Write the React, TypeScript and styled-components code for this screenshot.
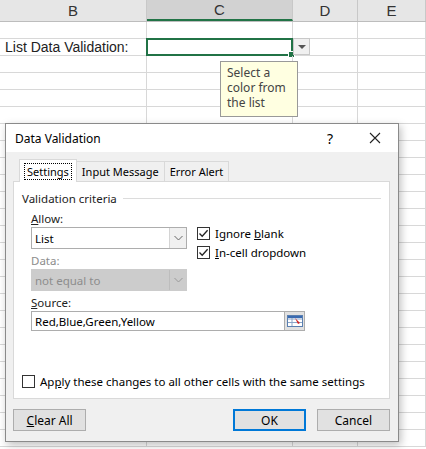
import React from "react";
import styled, { createGlobalStyle } from "styled-components";

const Global = createGlobalStyle`
  body { margin: 0; background: #fff; font-family: "Noto Sans", "DejaVu Sans", sans-serif; }
  * { box-sizing: border-box; }
`;

const cols = [
  { name: "B", w: 147 },
  { name: "C", w: 146, active: true },
  { name: "D", w: 65 },
  { name: "E", w: 68 },
];

const Page = styled.div`
  position: relative;
  width: 426px;
  height: 449px;
  overflow: hidden;
`;

const HeaderRow = styled.div`
  display: flex;
  height: 22px;
  background: #e6e6e6;
  border-bottom: 1px solid #bdbdbd;
`;

const HeaderCell = styled.div<{ $w: number; $active?: boolean }>`
  width: ${(p) => p.$w}px;
  flex: none;
  display: flex;
  align-items: center;
  justify-content: center;
  font-family: "Liberation Sans", Arial, sans-serif;
  font-size: 15px;
  color: #333;
  border-right: 1px solid #c8c8c8;
  background: ${(p) => (p.$active ? "#d2d2d2" : "transparent")};
  border-bottom: ${(p) => (p.$active ? "2px solid #217346" : "none")};
`;

const Row = styled.div`
  display: flex;
  height: 17px;
  border-bottom: 1px solid #d8d8d8;
`;

const Cell = styled.div<{ $w: number }>`
  position: relative;
  width: ${(p) => p.$w}px;
  flex: none;
  border-right: 1px solid #d8d8d8;
  font-family: "Liberation Sans", Arial, sans-serif;
  font-size: 14px;
  line-height: 17px;
  padding-left: 5px;
  color: #222;
`;

const Selected = styled.div`
  position: absolute;
  left: -1px;
  top: -1px;
  right: -1px;
  bottom: -1px;
  border: 2px solid #217346;
  &::after {
    content: "";
    position: absolute;
    right: -4px;
    bottom: -4px;
    width: 5px;
    height: 5px;
    background: #217346;
    border: 1px solid #fff;
  }
`;

const DropBtn = styled.div`
  position: absolute;
  left: 293px;
  top: 38px;
  width: 17px;
  height: 17px;
  background: #f0f0f0;
  border: 1px solid #c8c8c8;
  display: flex;
  align-items: center;
  justify-content: center;
  &::after {
    content: "";
    border-left: 4px solid transparent;
    border-right: 4px solid transparent;
    border-top: 4px solid #555;
  }
`;

const Tooltip = styled.div`
  position: absolute;
  left: 220px;
  top: 61px;
  width: 78px;
  height: 56px;
  background: #ffffe1;
  border: 1px solid #999;
  padding: 3px 6px;
  font-size: 12px;
  line-height: 15px;
  color: #444;
`;

const Dialog = styled.div`
  position: absolute;
  left: 5px;
  top: 123px;
  width: 394px;
  height: 319px;
  background: #f0f0f0;
  border: 1px solid #8a8a8a;
  box-shadow: 2px 3px 8px rgba(0, 0, 0, 0.25);
  display: flex;
  flex-direction: column;
  font-size: 11.5px;
  color: #000;
`;

const TitleBar = styled.div`
  height: 30px;
  background: #fff;
  display: flex;
  align-items: center;
  padding-left: 9px;
  font-size: 12px;
`;

const TitleText = styled.span`
  flex: 1;
`;

const TitleIcon = styled.span<{ $w: number }>`
  width: ${(p) => p.$w}px;
  display: flex;
  justify-content: center;
  font-size: 14px;
`;

const Body = styled.div`
  flex: 1;
  padding: 6px 8px 10px 7px;
  display: flex;
  flex-direction: column;
`;

const Tabs = styled.div`
  display: flex;
  height: 23px;
  align-items: flex-end;
  margin-left: 6px;
`;

const Tab = styled.div<{ $active?: boolean }>`
  height: ${(p) => (p.$active ? 23 : 20)}px;
  padding: 0 5px;
  display: flex;
  align-items: center;
  font-size: 11px;
  border: 1px solid #d9d9d9;
  border-bottom: none;
  background: ${(p) => (p.$active ? "#fff" : "#f0f0f0")};
  margin-right: -1px;
  position: relative;
  z-index: ${(p) => (p.$active ? 2 : 1)};
  margin-bottom: ${(p) => (p.$active ? -1 : 0)}px;
`;

const Focus = styled.span`
  outline: 1px dotted #000;
  padding: 0 2px;
`;

const Panel = styled.div`
  height: 218px;
  background: #fff;
  border: 1px solid #d9d9d9;
  padding: 9px 8px 0 8px;
  display: flex;
  flex-direction: column;
`;

const Legend = styled.div`
  display: flex;
  align-items: center;
  gap: 6px;
  color: #222;
  &::after {
    content: "";
    flex: 1;
    border-top: 1px solid #dcdcdc;
  }
`;

const Criteria = styled.div`
  display: flex;
  gap: 10px;
  padding-left: 9px;
  margin-top: 4px;
`;

const Column = styled.div`
  display: flex;
  flex-direction: column;
  width: 156px;
`;

const Label = styled.div<{ $disabled?: boolean }>`
  height: 17px;
  line-height: 17px;
  color: ${(p) => (p.$disabled ? "#8c8c8c" : "#222")};
`;

const Select = styled.div<{ $disabled?: boolean }>`
  height: 22px;
  border: 1px solid ${(p) => (p.$disabled ? "#cccccc" : "#adadad")};
  background: ${(p) => (p.$disabled ? "#cccccc" : "#fff")};
  color: ${(p) => (p.$disabled ? "#8c8c8c" : "#000")};
  display: flex;
  align-items: center;
  padding-left: 3px;
  margin-bottom: 3px;
`;

const SelectValue = styled.span`
  flex: 1;
`;

const Chevron = styled.span<{ $disabled?: boolean }>`
  width: 17px;
  height: 20px;
  border-left: 1px solid ${(p) => (p.$disabled ? "#bdbdbd" : "#d4d4d4")};
  background: ${(p) => (p.$disabled ? "#cccccc" : "#f0f0f0")};
  display: flex;
  align-items: center;
  justify-content: center;
`;

const Checks = styled.div`
  display: flex;
  flex-direction: column;
  gap: 4px;
  padding-top: 16px;
`;

const Check = styled.label`
  display: flex;
  align-items: center;
  gap: 5px;
`;

const Box = styled.span`
  width: 13px;
  height: 13px;
  border: 1px solid #333;
  background: #fff;
  display: flex;
  align-items: center;
  justify-content: center;
`;

const SourceWrap = styled.div`
  padding-left: 9px;
`;

const SourceInput = styled.div`
  width: 274px;
  height: 20px;
  border: 1px solid #adadad;
  display: flex;
  align-items: center;
  padding-left: 3px;
`;

const RefBtn = styled.span`
  width: 21px;
  height: 20px;
  margin-right: -1px;
  border: 1px solid #adadad;
  background: #e1e1e1;
  display: flex;
  align-items: center;
  justify-content: center;
`;

const Apply = styled(Check)`
  margin-top: auto;
  margin-bottom: 9px;
`;

const Buttons = styled.div`
  display: flex;
  margin-top: 10px;
`;

const Button = styled.div<{ $default?: boolean; $ml?: number }>`
  width: ${(p) => (p.$default ? 73 : 74)}px;
  height: 22px;
  margin-left: ${(p) => p.$ml ?? 0}px;
  border: ${(p) => (p.$default ? "2px solid #0078d7" : "1px solid #adadad")};
  background: #e1e1e1;
  display: flex;
  align-items: center;
  justify-content: center;
  font-size: 12px;
`;

const Tick = () => (
  <svg width="11" height="11" viewBox="0 0 11 11">
    <path d="M1.5 5.5 L4.2 8.3 L9.6 2.2" fill="none" stroke="#222" strokeWidth="1.3" />
  </svg>
);

const Down = ({ color }: { color: string }) => (
  <svg width="9" height="6" viewBox="0 0 9 6">
    <path d="M0.5 1 L4.5 5 L8.5 1" fill="none" stroke={color} strokeWidth="1" />
  </svg>
);

const RefIcon = () => (
  <svg width="16" height="14" viewBox="0 0 16 14">
    <rect x="0.5" y="1.5" width="15" height="11" fill="#fff" stroke="#5a7fb0" />
    <path d="M1 5h14M1 8.5h14M5 2v10" stroke="#8aa5c8" strokeWidth="1" />
    <path d="M8 4 L13 9 L11 10 Z" fill="#d02020" />
    <rect x="1" y="2" width="14" height="2" fill="#3a6ab0" />
  </svg>
);

export default function App() {
  return (
    <Page>
      <Global />
      <HeaderRow>
        {cols.map((c) => (
          <HeaderCell key={c.name} $w={c.w} $active={c.active}>
            {c.name}
          </HeaderCell>
        ))}
      </HeaderRow>
      {Array.from({ length: 25 }).map((_, r) => (
        <Row key={r}>
          {cols.map((c, i) => (
            <Cell key={c.name} $w={c.w}>
              {r === 1 && i === 0 && "List Data Validation:"}
              {r === 1 && i === 1 && <Selected />}
            </Cell>
          ))}
        </Row>
      ))}
      <DropBtn />
      <Tooltip>Select a color from the list</Tooltip>

      <Dialog>
        <TitleBar>
          <TitleText>Data Validation</TitleText>
          <TitleIcon $w={44}>?</TitleIcon>
          <TitleIcon $w={46}>
            <svg width="12" height="12" viewBox="0 0 12 12">
              <path d="M1 1L11 11M11 1L1 11" stroke="#222" strokeWidth="1.1" />
            </svg>
          </TitleIcon>
        </TitleBar>
        <Body>
          <Tabs>
            <Tab $active>
              <Focus>Settings</Focus>
            </Tab>
            <Tab>Input Message</Tab>
            <Tab>Error Alert</Tab>
          </Tabs>
          <Panel>
            <Legend>Validation criteria</Legend>
            <Criteria>
              <Column>
                <Label>
                  <u>A</u>llow:
                </Label>
                <Select>
                  <SelectValue>List</SelectValue>
                  <Chevron>
                    <Down color="#666" />
                  </Chevron>
                </Select>
                <Label $disabled>Data:</Label>
                <Select $disabled>
                  <SelectValue>not equal to</SelectValue>
                  <Chevron $disabled>
                    <Down color="#999" />
                  </Chevron>
                </Select>
              </Column>
              <Checks>
                <Check>
                  <Box>
                    <Tick />
                  </Box>
                  <span>
                    Ignore <u>b</u>lank
                  </span>
                </Check>
                <Check>
                  <Box>
                    <Tick />
                  </Box>
                  <span>
                    <u>I</u>n-cell dropdown
                  </span>
                </Check>
              </Checks>
            </Criteria>
            <SourceWrap>
              <Label>
                <u>S</u>ource:
              </Label>
              <SourceInput>
                <SelectValue>Red,Blue,Green,Yellow</SelectValue>
                <RefBtn>
                  <RefIcon />
                </RefBtn>
              </SourceInput>
            </SourceWrap>
            <Apply>
              <Box />
              <span>
                Ap<u>p</u>ly these changes to all other cells with the same settings
              </span>
            </Apply>
          </Panel>
          <Buttons>
            <Button>
              <span>
                <u>C</u>lear All
              </span>
            </Button>
            <Button $default $ml={147}>
              OK
            </Button>
            <Button $ml={11}>Cancel</Button>
          </Buttons>
        </Body>
      </Dialog>
    </Page>
  );
}
